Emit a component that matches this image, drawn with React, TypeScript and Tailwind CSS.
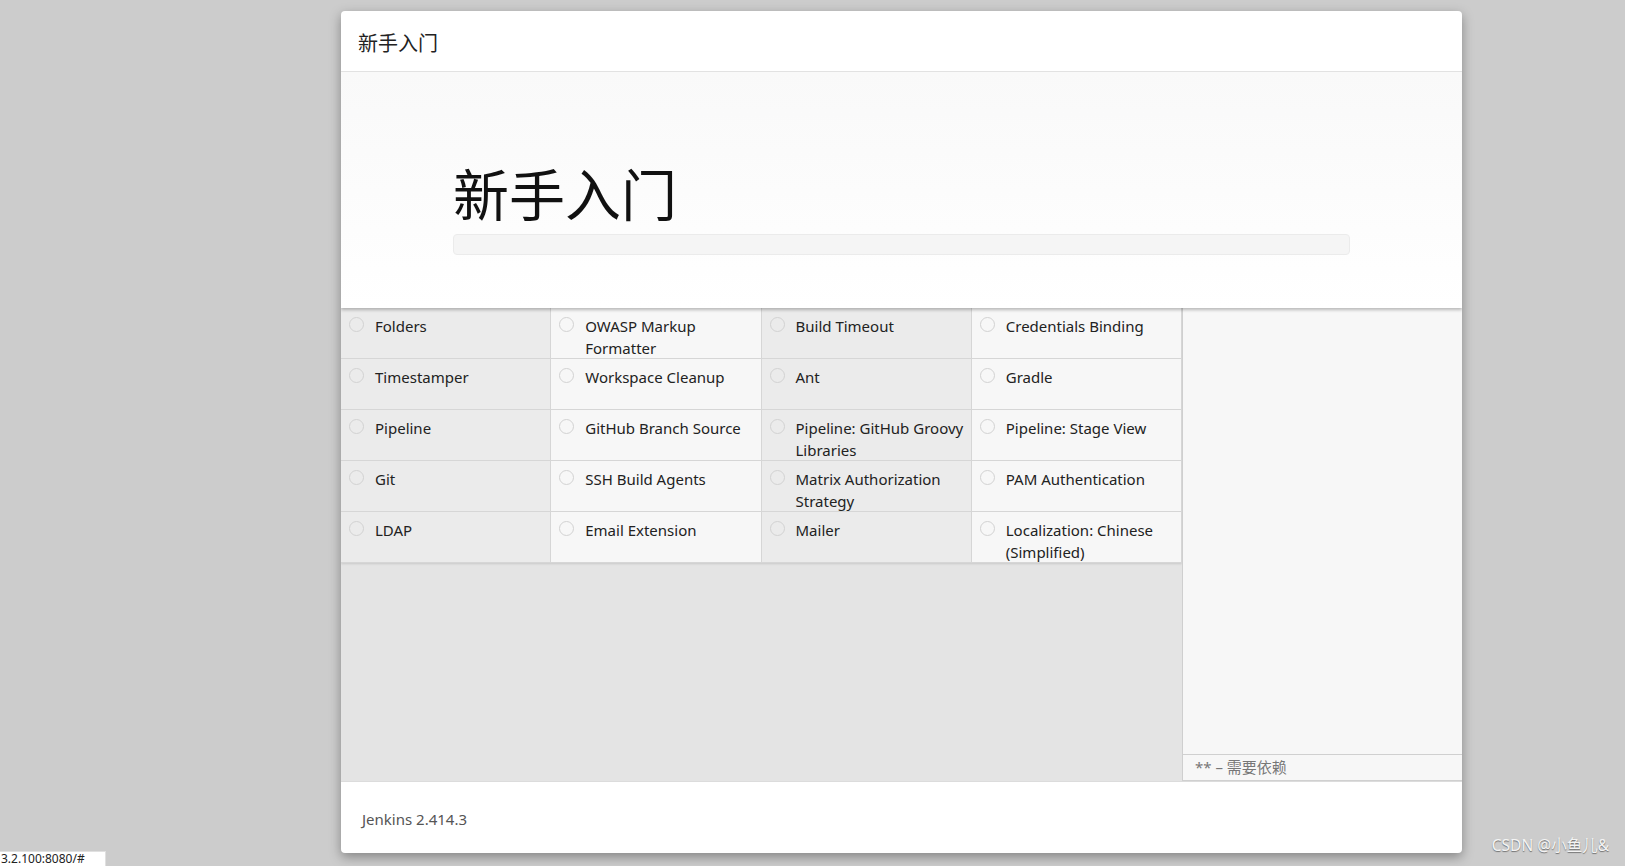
import React from "react";

const plugins = [
  "Folders",
  "OWASP Markup Formatter",
  "Build Timeout",
  "Credentials Binding",
  "Timestamper",
  "Workspace Cleanup",
  "Ant",
  "Gradle",
  "Pipeline",
  "GitHub Branch Source",
  "Pipeline: GitHub Groovy Libraries",
  "Pipeline: Stage View",
  "Git",
  "SSH Build Agents",
  "Matrix Authorization Strategy",
  "PAM Authentication",
  "LDAP",
  "Email Extension",
  "Mailer",
  "Localization: Chinese (Simplified)",
];

const font = "font-['Noto_Sans','Noto_Sans_CJK_SC',sans-serif]";

export default function App() {
  return (
    <div className={`relative h-[866px] w-[1625px] overflow-hidden bg-[#cccccc] pl-[341px] pt-[11px] ${font}`}>
      <div className="flex h-[842px] w-[1121px] flex-col overflow-hidden rounded-[4px] bg-white shadow-[0_4px_12px_rgba(0,0,0,0.35)]">
        {/* modal header */}
        <div className="flex h-[61px] shrink-0 items-center border-b border-[#e5e5e5] px-[17px] pt-[6px]">
          <h4 className="text-[20px] leading-none text-[#222]">新手入门</h4>
        </div>

        {/* hero */}
        <div className="relative z-10 flex h-[236px] shrink-0 flex-col bg-gradient-to-b from-[#f9f9f9] to-white pl-[112px] pr-[112px] pt-[92px] shadow-[0_2px_3px_rgba(0,0,0,0.25)]">
          <h1 className="text-[56px] font-normal leading-[60px] text-[#111]">新手入门</h1>
          <div className="mt-[10px] h-[21px] rounded-[4px] border border-[#ebebeb] bg-[#f5f5f5]" />
        </div>

        {/* plugins */}
        <div className="flex h-[473px] shrink-0">
          <div className="w-[841px] bg-[#e4e4e4]">
            <div className="grid grid-cols-4 shadow-[0_1px_2px_rgba(0,0,0,0.12)]">
              {plugins.map((name, i) => (
                <div
                  key={name}
                  className={`flex h-[51px] gap-[11px] border-b border-r border-[#d6d6d6] pl-[8px] pr-[2px] pt-[7px] ${
                    i % 2 === 0 ? "bg-[#ebebeb]" : "bg-[#f7f7f7]"
                  }`}
                >
                  <span className="mt-[2px] h-[15px] w-[15px] shrink-0 rounded-full border border-[#d2d2d2]" />
                  <span className="text-[15px] leading-[22px] text-[#222]">{name}</span>
                </div>
              ))}
            </div>
          </div>
          <div className="flex w-[280px] flex-col border-l border-[#cfcfcf] bg-[#f7f7f7]">
            <div className="flex-1" />
            <div className="flex h-[27px] items-center border-y border-[#d0d0d0] pl-[12px] text-[15px] text-[#777]">
              **&nbsp;–&nbsp;需要依赖
            </div>
          </div>
        </div>

        {/* footer */}
        <div className="flex h-[72px] shrink-0 items-center border-t border-[#dcdcdc] px-[21px] pt-[4px]">
          <span className="text-[15px] text-[#555]">Jenkins 2.414.3</span>
        </div>
      </div>

      {/* browser status bar */}
      <div className="absolute bottom-0 left-0 flex h-[15px] w-[106px] items-center overflow-hidden border-r border-t border-[#e0e0e0] bg-white pl-[1px]">
        <span className="whitespace-nowrap text-[12px] leading-[14px] text-[#222]">3.2.100:8080/#</span>
      </div>

      {/* watermark */}
      <div className="absolute bottom-[9px] right-[16px] text-[15.5px] text-[#f4f4f4] [text-shadow:0_1px_1px_rgba(0,0,0,0.45)]">
        CSDN @小鱼儿&amp;
      </div>
    </div>
  );
}
